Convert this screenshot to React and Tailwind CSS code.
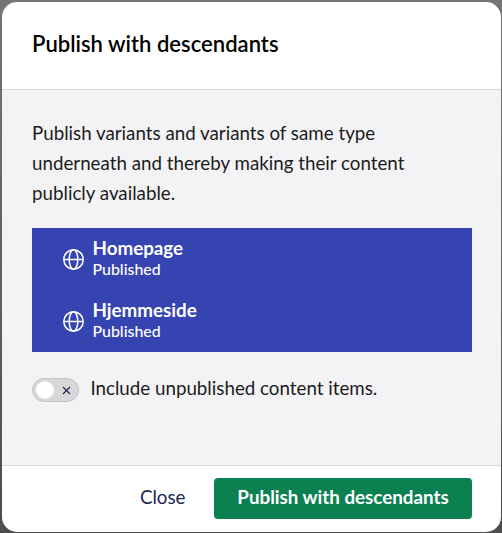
function Globe() {
  return (
    <svg width="21" height="21" viewBox="0 0 21 21" fill="none" stroke="currentColor" strokeWidth="1.5" className="mt-px shrink-0">
      <circle cx="10.5" cy="10.5" r="9.7" />
      <ellipse cx="10.5" cy="10.5" rx="4.3" ry="9.7" />
      <path d="M.8 10.5h19.4" />
    </svg>
  );
}

function Variant({ name }) {
  return (
    <div className="flex h-[62px] items-center gap-[8.5px] pl-[31px] text-white">
      <Globe />
      <div className="flex flex-col pb-[2px]">
        <span className="text-[18.75px] leading-[22px] font-bold">{name}</span>
        <span className="text-[15.9px] leading-[20px] font-medium">Published</span>
      </div>
    </div>
  );
}

export default function App() {
  return (
    <div className="h-[533px] w-[502px] overflow-hidden bg-gradient-to-b from-[#757575] to-[#4d4d4d] pt-[2px] pr-[1px] pb-[1px] pl-[2px] font-['Lato',sans-serif] text-[18.75px] whitespace-nowrap text-[#1c1c1c]">
      <div className="flex h-full flex-col overflow-hidden rounded-[15px] bg-white">
        <header className="flex h-[88px] shrink-0 items-center border-b border-[#d8d7d9] px-[30px] pb-[4px]">
          <h1 className="text-[22.05px] leading-[30px] font-semibold text-black">Publish with descendants</h1>
        </header>
        <main className="flex-1 bg-[#f3f3f5] px-[30px] pt-[28px]">
          <p className="leading-[30px]">
            Publish variants and variants of same type
            <br />
            underneath and thereby making their content
            <br />
            publicly available.
          </p>
          <div className="mt-[20px] w-[440px] bg-[#3544b1]">
            <Variant name="Homepage" />
            <Variant name="Hjemmeside" />
          </div>
          <label className="mt-[26px] flex h-[24px] items-center gap-[11.4px]">
            <span className="flex h-[24px] w-[47px] items-center justify-between rounded-full border border-[#c4c4c4] bg-[#d8d7d9] pr-[7px] pl-[3px]">
              <span className="size-[18px] rounded-full bg-white" />
              <svg width="9" height="9" viewBox="0 0 9 9" stroke="#1b264f" strokeWidth="1.2">
                <path d="M1 1l7 7M8 1l-7 7" />
              </svg>
            </span>
            <span className="pb-[4px] leading-[30px]">Include unpublished content items.</span>
          </label>
        </main>
        <footer className="flex h-[67px] shrink-0 items-center justify-end gap-[28.5px] border-t border-[#d8d7d9] pr-[29px] pb-[1px]">
          <button className="pb-[2px] text-[#1b264f]">Close</button>
          <button className="h-[41px] w-[258px] rounded-[4px] bg-[#0b8152] pb-[2px] font-bold text-white">Publish with descendants</button>
        </footer>
      </div>
    </div>
  );
}
